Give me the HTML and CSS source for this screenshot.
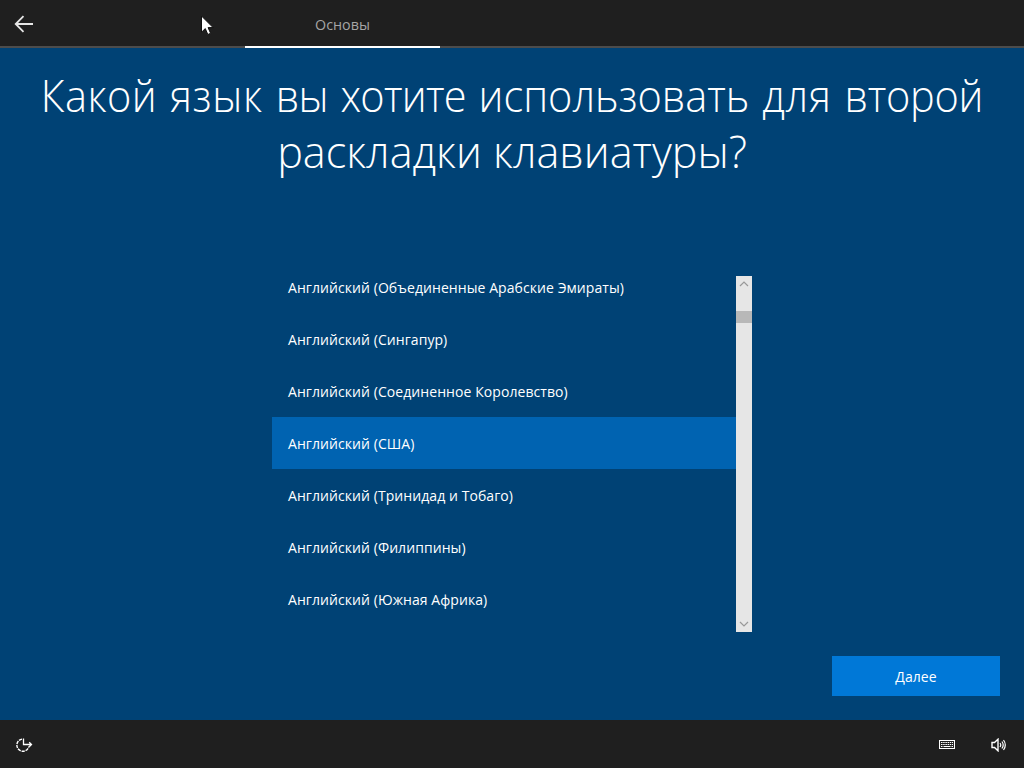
FILE: index.html
```html
<!DOCTYPE html>
<html lang="ru">
<head>
<meta charset="utf-8">
<title>Основы</title>
<link rel="stylesheet" href="styles.css">
</head>
<body>
<header class="topbar">
  <button class="back" aria-label="Назад">
    <svg width="20" height="18" viewBox="0 0 20 18"><path d="M1.5 9H19M9.5 1.2L1.7 9l7.8 7.8" fill="none" stroke="#e6e6e6" stroke-width="1.8"/></svg>
  </button>
  <div class="tab">Основы</div>
  <svg class="cursor" width="16" height="22" viewBox="0 0 16 22"><path d="M1.5 1v16.2l3.8-3.6 2.5 5.9 2.8-1.2-2.5-5.7h5z" fill="#fff" stroke="#111" stroke-width="1"/></svg>
</header>
<main class="stage">
  <h1 class="title">
    <span class="line line-first"><span class="open">Какой</span> <span class="wide">язык</span> <span class="tight">вы</span> <span class="tight">хотите</span> использовать <span class="wide">для</span> <span class="close">второй</span></span>
    <span class="line line-second">раскладки клавиатуры?</span>
  </h1>
  <div class="picker">
    <ul class="list">
      <li class="item">Английский (Объединенные Арабские Эмираты)</li>
      <li class="item">Английский (Сингапур)</li>
      <li class="item">Английский (Соединенное Королевство)</li>
      <li class="item selected">Английский (США)</li>
      <li class="item">Английский (Тринидад и Тобаго)</li>
      <li class="item">Английский (Филиппины)</li>
      <li class="item">Английский (Южная Африка)</li>
    </ul>
    <div class="scrollbar">
      <svg width="16" height="17" viewBox="0 0 16 17"><path d="M4 10l4-4 4 4" fill="none" stroke="#999" stroke-width="1.2"/></svg>
      <div class="thumb"></div>
      <svg width="16" height="17" viewBox="0 0 16 17"><path d="M4 7l4 4 4-4" fill="none" stroke="#999" stroke-width="1.2"/></svg>
    </div>
  </div>
  <div class="actions"><button class="next">Далее</button></div>
</main>
<footer class="bottombar">
  <svg class="ease" width="18" height="16" viewBox="0 0 18 16"><path d="M6 2.1A6.1 6.1 0 1 0 12.9 9.5" fill="none" stroke="#fff" stroke-width="1.4" stroke-dasharray="3.2 .9"/><path d="M7.5 1.5v6H15.5M13.2 5.2l2.3 2.3-2.3 2.3" fill="none" stroke="#fff" stroke-width="1.3"/></svg>
  <svg class="keyboard" width="16" height="10" viewBox="0 0 16 10"><path d="M.5.5h15v8H.5z" fill="none" stroke="#fff" stroke-width="1.1"/><path d="M2 2.5h12M2 4.5h12" stroke="#fff" stroke-dasharray="1.5 .7"/><path d="M2 6.5h1.5M4.5 6.5h7M12.5 6.5H14" stroke="#fff"/></svg>
  <svg class="speaker" width="16" height="14" viewBox="0 0 16 14"><path d="M1 4.5h2.5L7 1.2v11.6L3.5 9.5H1z" fill="none" stroke="#fff" stroke-width="1.4"/><path d="M9 5q1.5 2 0 4M10.9 3.5q2.6 3.5 0 7M12.5 2q3.6 5 0 10" fill="none" stroke="#fff" stroke-width="1.2"/></svg>
</footer>
</body>
</html>
```
FILE: styles.css
```css
* { box-sizing: border-box; }
body { margin: 0; width: 1024px; height: 768px; display: flex; flex-direction: column; overflow: hidden; background: #004275; color: #fff; font-family: "Open Sans", "Noto Sans", sans-serif; font-size: 14px; }
.topbar { position: relative; display: flex; height: 48px; background: #1f1f1f; border-bottom: 2px solid #4c4c4c; }
.back { width: 245px; padding: 2px 0 0 14px; border: 0; background: none; display: flex; align-items: center; }
.tab { width: 195px; height: 48px; padding-top: 2px; border-bottom: 2px solid #fff; display: flex; align-items: center; justify-content: center; color: #a5a5a5; font-size: 14.3px; }
.cursor { position: absolute; left: 200px; top: 15px; }
.stage { height: 672px; display: flex; flex-direction: column; align-items: center; }
.title { margin: 19px 0 0; height: 209px; text-align: center; font-size: 45px; line-height: 56px; font-weight: 300; white-space: nowrap; }
.line { display: block; }
.line-first { transform: scaleX(.922); word-spacing: 2.2px; }
.line-second { transform: scaleX(.96); }
.open { letter-spacing: .5px; }
.wide { letter-spacing: .85px; }
.tight { letter-spacing: -.8px; }
.close { letter-spacing: -.3px; }
.picker { width: 480px; height: 356px; display: flex; overflow: hidden; }
.list { list-style: none; margin: -15px 0 0; padding: 0; width: 464px; letter-spacing: .07px; }
.item { height: 52px; padding: 1px 0 0 16px; line-height: 52px; }
.selected { background: #0063b1; }
.scrollbar { width: 16px; background: #e6e6e6; display: flex; flex-direction: column; }
.thumb { height: 12px; margin: 18px 0 auto; background: #b8b8b8; }
.actions { margin-top: 24px; align-self: flex-end; padding-right: 24px; }
.next { width: 168px; height: 40px; padding: 0; border: 0; background: #0078d7; color: #fff; font: 14px "Open Sans", sans-serif; letter-spacing: .1px; }
.bottombar { height: 48px; background: #1f1f1f; display: flex; align-items: center; padding: 2px 17px 0 16px; }
.keyboard { margin-left: auto; margin-right: 36px; }
```
